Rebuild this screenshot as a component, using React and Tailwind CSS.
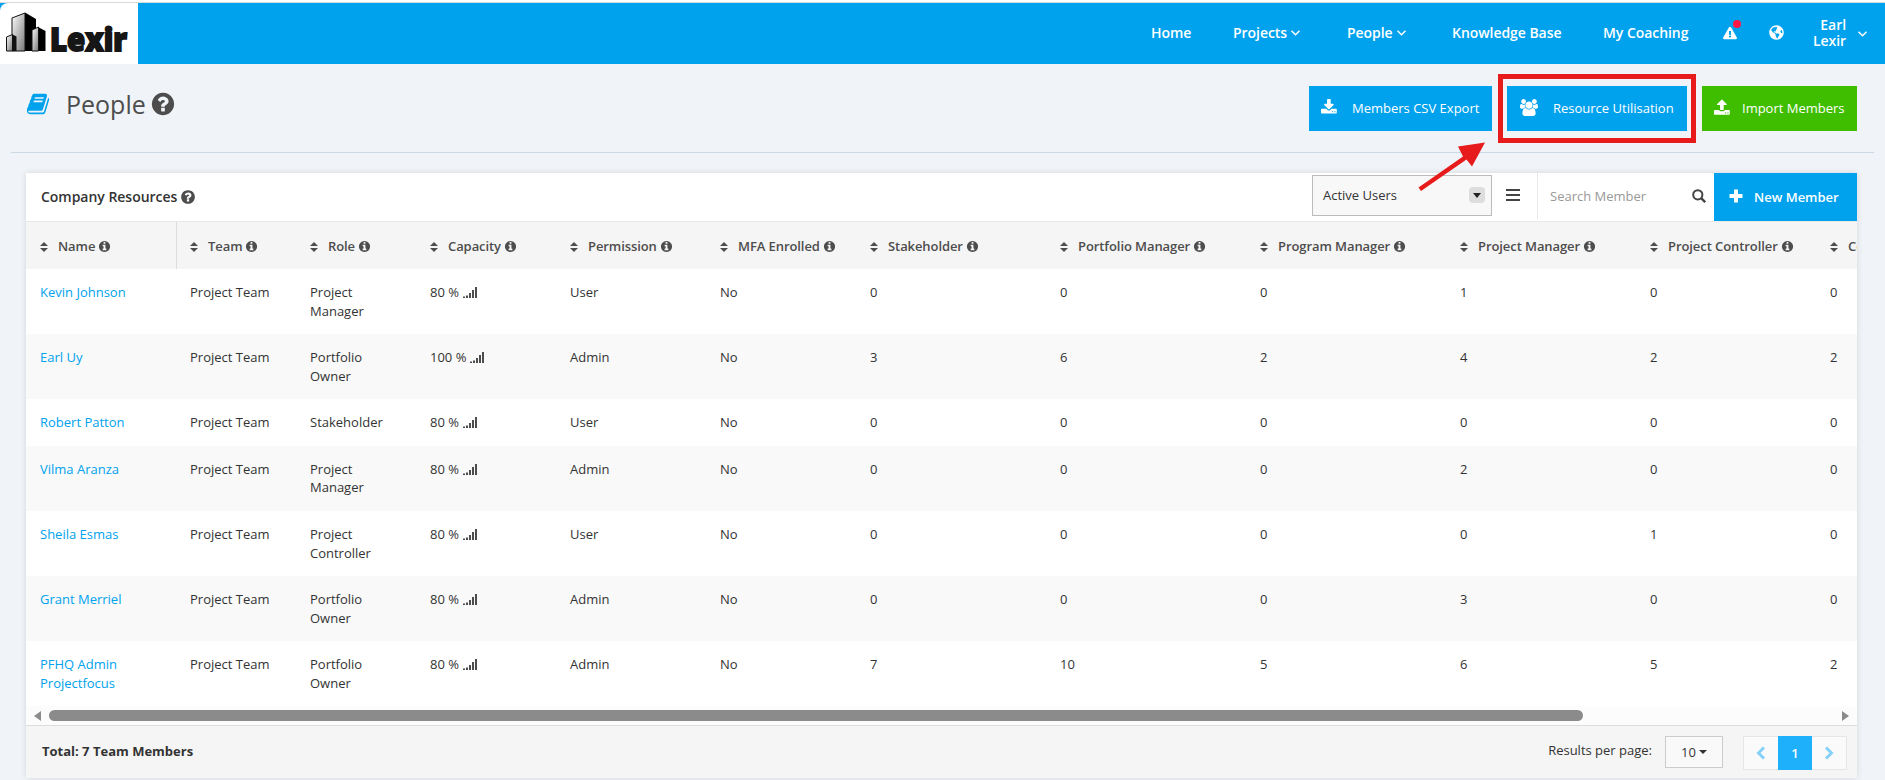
import clsx from 'clsx';
import { FaExclamationTriangle, FaGlobeAmericas } from 'react-icons/fa';

const paths = {
  download:
    'M1280 1344q0-26-19-45t-45-19-45 19-19 45 19 45 45 19 45-19 19-45zm256 0q0-26-19-45t-45-19-45 19-19 45 19 45 45 19 45-19 19-45zm128-224v320q0 40-28 68t-68 28h-1472q-40 0-68-28t-28-68v-320q0-40 28-68t68-28h465l135 136q58 56 136 56t136-56l136-136h464q40 0 68 28t28 68zm-325-569q17 41-14 70l-448 448q-18 19-45 19t-45-19l-448-448q-31-29-14-70 17-39 59-39h256v-448q0-26 19-45t45-19h256q26 0 45 19t19 45v448h256q42 0 59 39z',
  upload:
    'M1280 1472q0-26-19-45t-45-19-45 19-19 45 19 45 45 19 45-19 19-45zm256 0q0-26-19-45t-45-19-45 19-19 45 19 45 45 19 45-19 19-45zm128-224v320q0 40-28 68t-68 28h-1472q-40 0-68-28t-28-68v-320q0-40 28-68t68-28h427q21 56 70.5 92t110.5 36h256q61 0 110.5-36t70.5-92h427q40 0 68 28t28 68zm-325-648q-17 40-59 40h-256v448q0 26-19 45t-45 19h-256q-26 0-45-19t-19-45v-448h-256q-42 0-59-40-17-39 14-69l448-448q18-19 45-19t45 19l448 448q31 30 14 69z',
  book: 'M1703 478q40 57 18 129l-275 906q-19 64-76.5 107.5t-122.5 43.5h-923q-77 0-148.5-53.5t-99.5-131.5q-24-67-2-127 0-4 3-27t4-37q1-8-3-21.5t-3-19.5q2-11 8-21t16.5-23.5 16.5-23.5q23-38 45-91.5t30-91.5q3-10 .5-30t-.5-28q3-11 17-28t17-23q21-36 42-92t25-90q1-9-2.5-32t.5-28q4-13 22-30.5t22-22.5q19-26 42.5-84.5t27.5-96.5q1-8-3-25.5t-2-26.5q2-8 9-18t18-23 17-21q8-12 16.5-30.5t15-35 16-36 19.5-32 26.5-23.5 36-11.5 47.5 5.5l-1 3q38-9 51-9h761q74 0 114 56t18 130l-274 906q-36 119-71.5 153.5t-128.5 34.5h-869q-27 0-38 15-11 16-1 43 24 70 144 70h923q29 0 56-15.5t35-41.5l300-987q7-22 5-57 38 15 59 43zm-1064 2q-4 13 2 22.5t20 9.5h608q13 0 25.5-9.5t16.5-22.5l21-64q4-13-2-22.5t-20-9.5h-608q-13 0-25.5 9.5t-16.5 22.5zm-83 256q-4 13 2 22.5t20 9.5h608q13 0 25.5-9.5t16.5-22.5l21-64q4-13-2-22.5t-20-9.5h-608q-13 0-25.5 9.5t-16.5 22.5z',
  users:
    'M593 896q-162 5-265 128h-134q-82 0-138-40.5t-56-118.5q0-353 124-353 6 0 43.5 21t97.5 42.5 119 21.5q67 0 133-23-5 37-5 66 0 139 81 256zm1071 637q0 120-73 189.5t-194 69.5h-874q-121 0-194-69.5t-73-189.5q0-53 3.5-103.5t14-109 26.5-108.5 43-97.5 62-81 85.5-53.5 111.5-20q10 0 43 21.5t73 48 107 48 135 21.5 135-21.5 107-48 73-48 43-21.5q61 0 111.5 20t85.5 53.5 62 81 43 97.5 26.5 108.5 14 109 3.5 103.5zm-1024-1277q0 106-75 181t-181 75-181-75-75-181 75-181 181-75 181 75 75 181zm704 384q0 159-112.5 271.5t-271.5 112.5-271.5-112.5-112.5-271.5 112.5-271.5 271.5-112.5 271.5 112.5 112.5 271.5zm576 225q0 78-56 118.5t-138 40.5h-134q-103-123-265-128 81-117 81-256 0-29-5-66 66 23 133 23 59 0 119-21.5t97.5-42.5 43.5-21q124 0 124 353zm-128-609q0 106-75 181t-181 75-181-75-75-181 75-181 181-75 181 75 75 181z',
  question:
    'M1024 1376v-192q0-14-9-23t-23-9h-192q-14 0-23 9t-9 23v192q0 14 9 23t23 9h192q14 0 23-9t9-23zm256-672q0-88-55.5-163t-138.5-116-170-41q-243 0-371 213-15 24 8 42l132 100q7 6 19 6 16 0 25-12 53-68 86-92 34-24 86-24 48 0 85.5 26t37.5 59q0 38-20 61t-68 45q-63 28-115.5 86.5t-52.5 125.5v36q0 14 9 23t23 9h192q14 0 23-9t9-23q0-19 21.5-49.5t54.5-49.5q32-18 49-28.5t46-35 44.5-48 28-60.5 12.5-81zm384 192q0 209-103 385.5t-279.5 279.5-385.5 103-385.5-103-279.5-279.5-103-385.5 103-385.5 279.5-279.5 385.5-103 385.5 103 279.5 279.5 103 385.5z',
  info: 'M1152 1376v-160q0-14-9-23t-23-9h-96v-512q0-14-9-23t-23-9h-320q-14 0-23 9t-9 23v160q0 14 9 23t23 9h96v320h-96q-14 0-23 9t-9 23v160q0 14 9 23t23 9h448q14 0 23-9t9-23zm-128-896v-160q0-14-9-23t-23-9h-192q-14 0-23 9t-9 23v160q0 14 9 23t23 9h192q14 0 23-9t9-23zm640 416q0 209-103 385.5t-279.5 279.5-385.5 103-385.5-103-279.5-279.5-103-385.5 103-385.5 279.5-279.5 385.5-103 385.5 103 279.5 279.5 103 385.5z',
};

function Icon({ name, box = '0 0 1792 1792', className }) {
  return (
    <svg viewBox={box} fill="currentColor" className={clsx('shrink-0', className)}>
      <path d={paths[name]} />
    </svg>
  );
}

function Chevron({ className }) {
  return (
    <svg viewBox="0 0 9 6" fill="none" stroke="currentColor" strokeWidth="1.5" className={clsx('h-1.5 w-[9px] shrink-0', className)}>
      <path d="M.5.700l4 4 4-4" />
    </svg>
  );
}

function Signal() {
  return (
    <svg viewBox="0 0 14 11" fill="currentColor" className="h-[11px] w-[14px] text-[#4d4d4d]">
      <path d="M0 9.500h2V11H0zM3 8.500h2V11H3zM6 6h2v5H6zM9 3h2v8H9zM12 0h2v11h-2z" />
    </svg>
  );
}

const columns = [
  { label: 'Name', width: 'w-[150px]' },
  { label: 'Team', width: 'w-[120px]' },
  { label: 'Role', width: 'w-[120px]' },
  { label: 'Capacity', width: 'w-[140px]' },
  { label: 'Permission', width: 'w-[150px]' },
  { label: 'MFA Enrolled', width: 'w-[150px]' },
  { label: 'Stakeholder', width: 'w-[190px]' },
  { label: 'Portfolio Manager', width: 'w-[200px]' },
  { label: 'Program Manager', width: 'w-[200px]' },
  { label: 'Project Manager', width: 'w-[190px]' },
  { label: 'Project Controller', width: 'w-[180px]' },
  { label: 'Contributor', width: 'w-[150px]' },
];

const members = [
  ['Kevin Johnson', 'Project Team', 'Project Manager', '80 %', 'User', 'No', 0, 0, 0, 1, 0, 0],
  ['Earl Uy', 'Project Team', 'Portfolio Owner', '100 %', 'Admin', 'No', 3, 6, 2, 4, 2, 2],
  ['Robert Patton', 'Project Team', 'Stakeholder', '80 %', 'User', 'No', 0, 0, 0, 0, 0, 0],
  ['Vilma Aranza', 'Project Team', 'Project Manager', '80 %', 'Admin', 'No', 0, 0, 0, 2, 0, 0],
  ['Sheila Esmas', 'Project Team', 'Project Controller', '80 %', 'User', 'No', 0, 0, 0, 0, 1, 0],
  ['Grant Merriel', 'Project Team', 'Portfolio Owner', '80 %', 'Admin', 'No', 0, 0, 0, 3, 0, 0],
  ['PFHQ Admin Projectfocus', 'Project Team', 'Portfolio Owner', '80 %', 'Admin', 'No', 7, 10, 5, 6, 5, 2],
];

function Logo() {
  return (
    <div className="flex h-[61px] w-[138px] items-start rounded-tl-lg bg-white pl-1.5 pt-[9px]">
      <svg viewBox="0 0 40 40" className="h-10 w-10 shrink-0">
        <defs>
          <linearGradient id="tower" x1="0" y1="0" x2="1" y2="1">
            <stop offset="0" stopColor="#fff" />
            <stop offset="1" stopColor="#777" />
          </linearGradient>
        </defs>
        <path d="M19 .5L30 7v32H19z" fill="#000" />
        <path d="M6 6L19 1v38H6z" fill="url(#tower)" stroke="#111" />
        <path d="M.5 25l6-2.500v16.500h-6z" fill="url(#tower)" stroke="#111" />
        <path d="M6.500 22.500l4 2v14.500h-4z" fill="#111" />
        <path d="M32 15l7.500 4v20H32z" fill="#000" />
        <path d="M26 18l6.500-3v24H26z" fill="url(#tower)" stroke="#111" />
      </svg>
      <svg viewBox="0 0 84 48" className="h-12 w-[84px] shrink-0 overflow-visible">
        <text x="4" y="38.500" textLength="77" lengthAdjust="spacingAndGlyphs" fill="#161616" stroke="#161616" strokeWidth="1.800" className="font-['Open_Sans'] text-[31px] font-extrabold">
          Lexir
        </text>
      </svg>
    </div>
  );
}

function Navbar() {
  return (
    <header className="flex h-[61px] items-start bg-[#00a2ed] text-sm font-semibold text-white">
      <Logo />
      <nav className="ml-auto flex h-[61px] items-center pb-0.5 pr-[18px] tracking-[-0.05px]">
        <a className="w-[82px]">Home</a>
        <a className="flex w-[114px] items-center gap-1">
          Projects <Chevron />
        </a>
        <a className="flex w-[105px] items-center gap-1">
          People <Chevron />
        </a>
        <a className="w-[151px]">Knowledge Base</a>
        <a className="w-[120px]">My Coaching</a>
        <span className="relative w-[46px]">
          <FaExclamationTriangle size={14} />
          <span className="absolute -top-[6px] left-[10px] size-2 rounded-full bg-[#ff1744]" />
        </span>
        <FaGlobeAmericas size={15} className="mr-[29px]" />
        <span className="mr-3 w-[33px] text-right leading-4">
          Earl
          <br />
          Lexir
        </span>
        <Chevron className="mt-0.5" />
      </nav>
    </header>
  );
}

function PageHeader() {
  return (
    <div className="mx-[11px] flex h-[89px] items-start border-b border-[#ccd9e3] text-[#4d4d4d]">
      <Icon name="book" className="ml-[15px] mt-[28px] size-6 text-[#00a2ed]" />
      <h1 className="ml-4 mt-[22px] w-[79px] text-[25px] leading-9">People</h1>
      <Icon name="question" className="ml-[5px] mt-[27px] size-[26px]" />
      <div className="ml-auto mr-[17px] flex pt-[22px] text-[13px] text-white">
        <button className="flex h-[45px] w-[183px] items-center bg-[#00a2ed] pl-3">
          <Icon name="download" className="mb-0.5 size-[17px]" />
          <span className="ml-[14px]">Members CSV Export</span>
        </button>
        <div className="relative ml-[15px] bg-[#00a2ed]">
          <button className="flex h-[45px] w-[180px] items-center pl-[13px]">
            <Icon name="users" box="0 0 1920 1792" className="mb-[3px] h-[17px] w-[18px]" />
            <span className="ml-[15px]">Resource Utilisation</span>
          </button>
          <span className="absolute -left-[9px] -top-3 h-[69px] w-[198px] border-5 border-[#e81b1c]" />
          <svg viewBox="0 0 70 52" className="absolute -left-[91px] top-[54px] z-10 h-[52px] w-[70px]" fill="#e81b1c">
            <path d="M2.500 47.500L47 16.500 42 6.500 69 2.500 56 26.500 50.500 19.500 5 51z" />
          </svg>
        </div>
        <button className="ml-[15px] flex h-[45px] w-[155px] items-center bg-[#3fbe00] pl-3">
          <Icon name="upload" className="mb-[3px] size-[17px]" />
          <span className="ml-[11px]">Import Members</span>
        </button>
      </div>
    </div>
  );
}

function Toolbar() {
  return (
    <div className="flex h-12 items-center text-sm text-[#333]">
      <h2 className="ml-[15px] w-[137px] whitespace-nowrap font-semibold tracking-[-0.03px]">Company Resources</h2>
      <Icon name="question" className="ml-[2px] mb-px size-4 text-[#4d4d4d]" />
      <div className="mb-1 ml-auto flex h-[41px] w-[180px] items-center justify-between border border-[#bbb] bg-[#f8f8f8] pl-2.5 pr-1.5 text-[13px]">
        Active Users
        <span className="flex size-4 items-center justify-center rounded-sm bg-[#ddd]">
          <span className="border-x-4 border-t-5 border-x-transparent border-t-[#222]" />
        </span>
      </div>
      <span className="mb-[5px] ml-[14px] flex w-[14px] flex-col gap-[3px]">
        <span className="h-0.5 bg-[#444]" />
        <span className="h-0.5 bg-[#444]" />
        <span className="h-0.5 bg-[#444]" />
      </span>
      <div className="mb-0.5 ml-[17px] flex h-[46px] w-[177px] items-center border-l border-[#e8e8e8] pl-3 pr-2 text-[13px] text-[#999]">
        Search Member
        <svg viewBox="0 0 14 14" fill="none" stroke="#444" className="ml-auto size-[14px]">
          <circle cx="5.800" cy="5.800" r="4.600" strokeWidth="2" />
          <path d="M9.200 9.200l4 4" strokeWidth="2.400" />
        </svg>
      </div>
      <button className="flex h-12 w-[143px] items-center bg-[#00a2ed] pl-[15px] text-[13px] font-semibold text-white">
        <svg viewBox="0 0 14 14" fill="currentColor" className="mb-[3px] size-[14px]">
          <path d="M5 .5h4V5h4.500v4H9v4.500H5V9H.5V5H5z" />
        </svg>
        <span className="ml-[11px]">New Member</span>
      </button>
    </div>
  );
}

function MembersTable() {
  return (
    <div className="overflow-hidden border-t border-[#e9e9e9] text-[13px] text-[#333]">
      <table className="w-[1940px] table-fixed border-separate border-spacing-0 text-left">
        <thead>
          <tr className="h-[47px] bg-[#f5f5f5]">
            {columns.map((col, i) => (
              <th key={col.label} className={clsx(col.width, 'p-0 pt-0.5 font-semibold tracking-[-0.08px] text-[#4d4d4d]', i === 1 ? 'border-l border-[#ddd] pl-[13px]' : 'pl-[14px]')}>
                <div className="flex items-center">
                  <svg viewBox="0 0 8 10" fill="currentColor" className="mr-[10px] h-[10px] w-2">
                    <path d="M4 0l4 4H0zM0 6h8l-4 4z" />
                  </svg>
                  {col.label}
                  <Icon name="info" className="ml-[3px] size-[13px]" />
                </div>
              </th>
            ))}
          </tr>
        </thead>
        <tbody>
          {members.map((row) => (
            <tr key={row[0]} className="align-top even:bg-[#f9f9f9]">
              {row.map((value, i) => (
                <td key={i} className={clsx('py-[14px] pl-[14px] pr-4 leading-[1.42857]', i === 0 && 'text-[#00a2ed]')}>
                  {i === 3 ? (
                    <span className="flex items-center gap-1">
                      {value} <Signal />
                    </span>
                  ) : (
                    value
                  )}
                </td>
              ))}
            </tr>
          ))}
        </tbody>
      </table>
      <div className="flex h-[19px] items-center bg-[#fcfcfc] px-2">
        <span className="border-y-[5px] border-r-[7px] border-y-transparent border-r-[#8b8b8b]" />
        <span className="ml-2 h-[11px] w-[1534px] rounded-full bg-[#8b8b8b]" />
        <span className="ml-auto border-y-[5px] border-l-[7px] border-y-transparent border-l-[#8b8b8b]" />
      </div>
    </div>
  );
}

function TableFooter() {
  return (
    <div className="flex h-[53px] items-center border-t border-[#ddd] bg-[#f5f5f5] text-[13px] text-[#333]">
      <span className="mb-0.5 ml-4 font-bold">Total: 7 Team Members</span>
      <span className="mb-[3px] ml-auto mr-[13px]">Results per page:</span>
      <button className="flex h-8 w-[58px] items-center justify-center gap-[3px] border border-[#ccc] bg-[#f9f9f9]">
        10
        <span className="border-x-4 border-t-4 border-x-transparent border-t-[#333]" />
      </button>
      <div className="ml-5 mr-[10px] mt-0.5 flex h-[34px] w-[104px] border border-[#e6e6e6] bg-[#fafafa]">
        <button className="flex flex-1 items-center justify-center text-[#84d2f8]">
          <svg viewBox="0 0 10 14" fill="none" stroke="currentColor" strokeWidth="3" className="h-[14px] w-[10px]">
            <path d="M8 1.500L2.500 7 8 12.500" />
          </svg>
        </button>
        <button className="-my-px w-[34px] bg-[#1eb0fa] font-semibold text-white">1</button>
        <button className="flex flex-1 items-center justify-center text-[#84d2f8]">
          <svg viewBox="0 0 10 14" fill="none" stroke="currentColor" strokeWidth="3" className="h-[14px] w-[10px]">
            <path d="M2 1.500L7.500 7 2 12.500" />
          </svg>
        </button>
      </div>
    </div>
  );
}

export default function App() {
  return (
    <div className="h-[780px] w-[1885px] overflow-hidden bg-[#f0f4f8] font-['Open_Sans',sans-serif]">
      <div className="h-[3px] border-b border-[#d5dadd] bg-white" />
      <Navbar />
      <PageHeader />
      <main className="mx-[26px] mr-[28px] mt-5 bg-white shadow-[0_0_6px_rgba(0,0,0,0.12)]">
        <Toolbar />
        <MembersTable />
        <TableFooter />
      </main>
    </div>
  );
}
